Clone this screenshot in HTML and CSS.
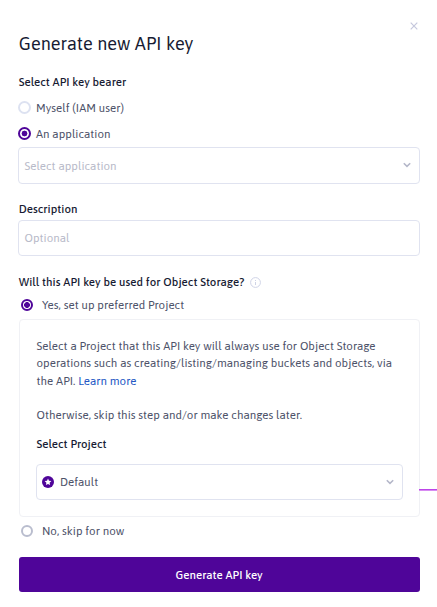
FILE: index.html
```
<!DOCTYPE html>
<html lang="en">
<head>
<meta charset="utf-8">
<title>Generate new API key</title>
<link rel="stylesheet" href="styles.css">
</head>
<body>
<main class="modal">
  <header class="top">
    <button class="close" aria-label="Close"><svg width="8" height="8" viewBox="0 0 8 8"><path d="M.7.7l6.6 6.6M7.3.7L.7 7.3"/></svg></button>
  </header>
  <h1>Generate new API key</h1>

  <h2 class="bearer">Select API key bearer</h2>
  <label class="radio first"><i class="dot pale"></i><span>Myself (IAM user)</span></label>
  <label class="radio second"><i class="dot on"></i><span>An application</span></label>
  <div class="field select"><span class="hint">Select application</span><svg class="chev" width="8" height="6" viewBox="0 0 8 6"><path d="M.8 1.3L4 4.4l3.2-3.1"/></svg></div>

  <h2 class="desc">Description</h2>
  <div class="field text"><span class="hint">Optional</span></div>

  <h2 class="storage"><span>Will this API key be used for Object Storage?</span><svg class="info" width="11" height="11" viewBox="0 0 11 11"><circle cx="5.5" cy="5.5" r="4.9"/><path d="M5.5 5v3M5.5 3v1"/></svg></h2>
  <label class="radio inset yes"><i class="dot small on"></i><span>Yes, set up preferred Project</span></label>

  <section class="panel">
    <p>Select a Project that this API key will always use for Object Storage<br>operations such as creating/listing/managing buckets and objects, via<br>the API. <a>Learn more</a></p>
    <p class="otherwise">Otherwise, skip this step and/or make changes later.</p>
    <h2 class="project">Select Project</h2>
    <div class="field default"><svg class="badge" width="12" height="12" viewBox="0 0 12 12"><circle cx="6" cy="6" r="6"/><path d="M6 2.6l1 2.2 2.4.3-1.8 1.6.5 2.4L6 7.9 3.9 9.1l.5-2.4-1.8-1.6 2.4-.3z"/></svg><span>Default</span><svg class="chev" width="8" height="6" viewBox="0 0 8 6"><path d="M.8 1.3L4 4.4l3.2-3.1"/></svg></div>
    <i class="connector"></i>
  </section>

  <label class="radio inset no"><i class="dot small grey"></i><span>No, skip for now</span></label>
  <button class="submit">Generate API key</button>
</main>
</body>
</html>
```
FILE: styles.css
```
* { box-sizing: border-box; }
body {
  margin: 0;
  background: #fff;
  color: #4d5269;
  font: 11.5px/17.5px Asap, "Noto Sans", "Open Sans", sans-serif;
  letter-spacing: 0.04px;
}
h1, h2, p { margin: 0; }
h2 { font-size: 11.5px; font-weight: 500; color: #171b33; white-space: nowrap; }
button { border: 0; padding: 0; font: inherit; letter-spacing: inherit; }
svg { fill: none; flex: none; }
.modal { width: 401.5px; margin-left: 18px; display: flex; flex-direction: column; }
.top { height: 31px; display: flex; justify-content: flex-end; padding: 22px 2px 0 0; }
.close { width: 8px; height: 8px; background: none; display: flex; }
.close path { stroke: #c5c8dd; stroke-width: 1.2; }
h1 { height: 26px; padding-left: 0.7px; font-size: 18px; line-height: 26px; font-weight: 400; letter-spacing: 0.1px; color: #171b33; white-space: nowrap; }
.bearer { height: 18px; margin-top: 15.5px; padding-left: 0.7px; }
.radio { display: flex; align-items: center; height: 18px; white-space: nowrap; gap: 5px; }
.first, .second { margin-top: 8px; }
.dot { width: 13px; height: 13px; border-radius: 50%; border: 2px solid #4f0599; flex: none; }
.pale { border-color: #dde2f1; }
.grey { border-color: #b9bdce; }
.small { width: 12px; height: 12px; }
.on { background: radial-gradient(circle, #4f0599 2.6px, transparent 3.2px); }
.inset { padding-left: 3.3px; gap: 8.7px; }
.field { display: flex; align-items: center; border: 1px solid #e0e3f0; border-radius: 4px; height: 36.5px; padding: 0 8px 0 5.5px; white-space: nowrap; }
.select { margin-top: 4.5px; padding-right: 7.5px; }
.hint { color: #b8bac9; }
.chev { margin-left: auto; }
.chev path { stroke: #b4b7c9; stroke-width: 1.6; }
.desc { height: 18px; margin-top: 16.5px; padding-left: 0.7px; }
.text { height: 36px; margin-top: 2px; }
.storage { display: flex; align-items: center; height: 18px; margin-top: 17px; padding-left: 0.7px; letter-spacing: 0.055px; }
.info { margin-left: 6px; }
.info circle, .info path { stroke: #cfd3e6; }
.yes { margin-top: 4.5px; }
.panel { position: relative; height: 198px; margin: 5.5px 0 0 0.5px; border: 1px solid #f0f1f5; border-radius: 4px; padding: 16.8px 16px 0 17px; white-space: nowrap; }
.panel p { line-height: 17.4px; }
.otherwise { margin-top: 17.4px; }
a { color: #2357c4; }
.project { margin-top: 11.5px; }
.default { height: 36px; margin: 11.4px 0 0 -1px; }
.badge { margin-right: 6px; }
.badge circle { fill: #4f0599; }
.badge path { fill: #fff; }
.connector { position: absolute; left: 399px; top: 169px; width: 20px; height: 2px; background: linear-gradient(#bd45e8 50%, #d88cf2 50%); }
.no { margin-top: 5px; }
.submit { height: 35px; margin: 17px 0 0 0.7px; border-radius: 3px; background: #4f0599; color: #fff; font-weight: 500; }
```
